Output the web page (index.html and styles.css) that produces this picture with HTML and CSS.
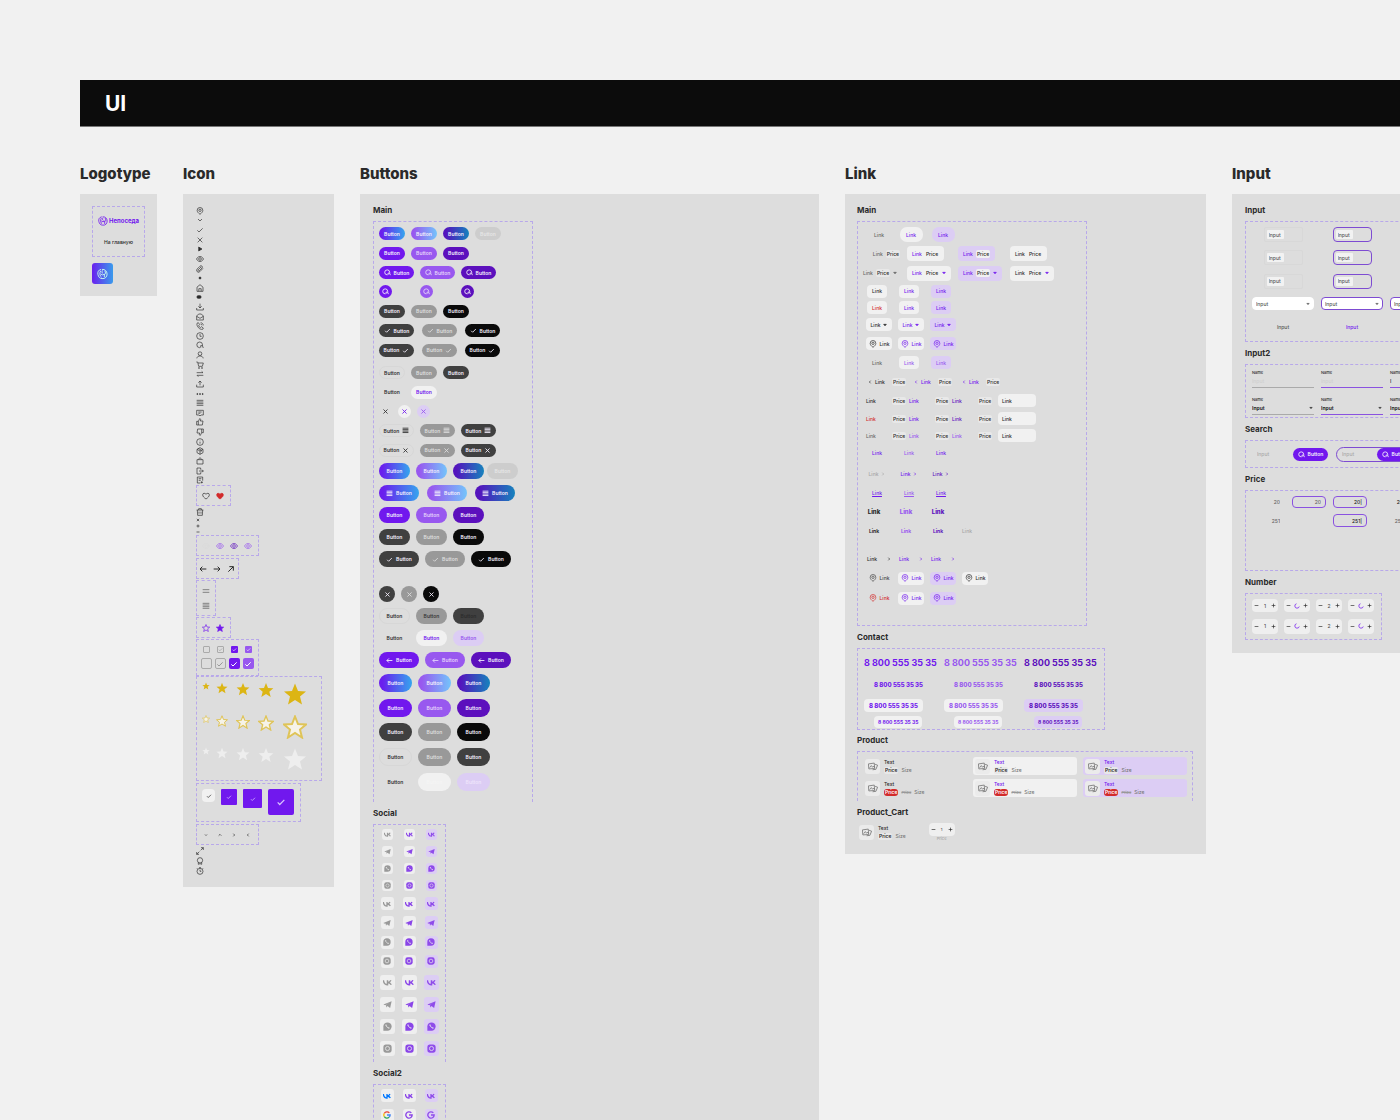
FILE: index.html
```html
<!DOCTYPE html>
<html lang="en">
<head>
<meta charset="utf-8">
<title>UI</title>
<link rel="stylesheet" href="styles.css">
</head>
<body>
<svg class="sprite" aria-hidden="true">
  <defs>
    <symbol id="pin" viewBox="0 0 24 24"><path d="M12 22C7 18 3.500 14.500 3.500 10a8.500 8.500 0 0 1 17 0c0 4.500-3.500 8-8.500 12z"/><circle cx="12" cy="10" r="3.500"/></symbol>
    <symbol id="down" viewBox="0 0 24 24"><path d="M6 9l6 6 6-6"/></symbol>
    <symbol id="check" viewBox="0 0 24 24"><path d="M4 13l5 5L20 7"/></symbol>
    <symbol id="x" viewBox="0 0 24 24"><path d="M5 5l14 14M19 5L5 19"/></symbol>
    <symbol id="play" viewBox="0 0 24 24"><path d="M8 6l10 6-10 6z" fill="currentColor"/></symbol>
    <symbol id="eye" viewBox="0 0 24 24"><path d="M1.500 12C4 7 8 4.500 12 4.500S20 7 22.500 12C20 17 16 19.500 12 19.500S4 17 1.500 12z"/><circle cx="12" cy="12" r="4"/></symbol>
    <symbol id="clip" viewBox="0 0 24 24"><path d="M21 10l-9.500 10a5.500 5.500 0 0 1-8-8L12 3.500a4 4 0 0 1 6 5.500L9.500 17.500a2 2 0 0 1-3-3L15 6"/></symbol>
    <symbol id="dot" viewBox="0 0 24 24"><circle cx="12" cy="12" r="3" fill="currentColor"/></symbol>
    <symbol id="home" viewBox="0 0 24 24"><path d="M3 9.500L12 2l9 7.500V22H3zM8.500 22v-8h7v8"/></symbol>
    <symbol id="blob" viewBox="0 0 24 24"><rect x="3" y="8" width="12" height="8" rx="3" fill="currentColor"/></symbol>
    <symbol id="download" viewBox="0 0 24 24"><path d="M12 2v13M7 10l5 5 5-5M2 15v6h20v-6"/></symbol>
    <symbol id="mail" viewBox="0 0 24 24"><path d="M2 9l6-6h8l6 6v12H2zM2 10l10 6 10-6"/></symbol>
    <symbol id="phone" viewBox="0 0 24 24"><path d="M3 4l4-2 4 6-3 3c1 3 3 5 5 6l3-3 6 4-2 4C11 24 1 13 3 4zM14 2c4 0 8 4 8 8M14 6c2 0 4 2 4 4"/></symbol>
    <symbol id="clock" viewBox="0 0 24 24"><circle cx="12" cy="12" r="10"/><path d="M12 6v7h5"/></symbol>
    <symbol id="search" viewBox="0 0 24 24"><path d="M12 20H10.500a8.500 8.500 0 1 1 9-8.500v3M14 14h5l3 7M14 14v6"/></symbol>
    <symbol id="user" viewBox="0 0 24 24"><circle cx="12" cy="8" r="5.500"/><path d="M2.500 22c1-6 5-7 9.500-7s8.500 1 9.500 7"/></symbol>
    <symbol id="cart" viewBox="0 0 24 24"><path d="M1 3h4l3 13h11l3-10H6"/><circle cx="9" cy="21" r="1.500"/><circle cx="18" cy="21" r="1.500"/></symbol>
    <symbol id="swap" viewBox="0 0 24 24"><path d="M2 8h19l-4-4M22 16H3l4 4"/></symbol>
    <symbol id="upload" viewBox="0 0 24 24"><path d="M12 16V3M7 8l5-5 5 5M2 14v7h20v-7"/></symbol>
    <symbol id="dots" viewBox="0 0 24 24"><g fill="currentColor"><circle cx="4" cy="12" r="1.500"/><circle cx="12" cy="12" r="1.500"/><circle cx="20" cy="12" r="1.500"/></g></symbol>
    <symbol id="list" viewBox="0 0 24 24"><path d="M2 4h20M2 9h20M2 14h20M2 19h20"/></symbol>
    <symbol id="comment" viewBox="0 0 24 24"><path d="M2 4h20v14h-7l-3 3-3-3H2zM7 9h10M7 13h6"/></symbol>
    <symbol id="like" viewBox="0 0 24 24"><path d="M2 10h5v11H2zM7 10l4-8c3 0 4 2 2 7h8l-2 12H7"/></symbol>
    <symbol id="dislike" viewBox="0 0 24 24"><path d="M22 14h-5V3h5zM17 14l-4 8c-3 0-4-2-2-7H3L5 3h12"/></symbol>
    <symbol id="info" viewBox="0 0 24 24"><circle cx="12" cy="12" r="10"/><path d="M12 11v6M12 7v1"/></symbol>
    <symbol id="box" viewBox="0 0 24 24"><path d="M12 2l9 5v10l-9 5-9-5V7zM3 7l9 5 9-5M12 12v10M7 4.500l9 5v4"/></symbol>
    <symbol id="bag" viewBox="0 0 24 24"><path d="M3 8h18v13H3zM8 8c0-7 8-7 8 0"/></symbol>
    <symbol id="exit" viewBox="0 0 24 24"><path d="M14 8V3H3v18h11v-5M9 12h13M18 8l4 4-4 4"/></symbol>
    <symbol id="note" viewBox="0 0 24 24"><path d="M20 14V3H4v18h9M8 8h8M8 13h6M17 16v6M14 19h7"/></symbol>
    <symbol id="heart" viewBox="0 0 24 24"><path d="M12 21C6 17 2 13 2 8.500 2 3 9 2 12 7c3-5 10-4 10 1.500 0 4.500-4 8.500-10 12.500z"/></symbol>
    <symbol id="trash" viewBox="0 0 24 24"><path d="M2 6h20M8 6V2h8v4M4 6l1 16h14l1-16M9 11v6M15 11v6"/></symbol>
    <symbol id="plus" viewBox="0 0 24 24"><path d="M12 3v18M3 12h18"/></symbol>
    <symbol id="minus" viewBox="0 0 24 24"><path d="M3 12h18"/></symbol>
    <symbol id="left" viewBox="0 0 24 24"><path d="M22 12H3M10 5l-7 7 7 7"/></symbol>
    <symbol id="right" viewBox="0 0 24 24"><path d="M2 12h19M14 5l7 7-7 7"/></symbol>
    <symbol id="upright" viewBox="0 0 24 24"><path d="M4 20L19 5M7 5h12v12"/></symbol>
    <symbol id="equals" viewBox="0 0 24 24"><path d="M2 8h20M2 16h20"/></symbol>
    <symbol id="star" viewBox="0 0 24 24"><path d="M12 1.500l3 7.500 8 .5-6 5 2 8-7-4.500L5 22.500l2-8-6-5L9 9z"/></symbol>
    <symbol id="expand" viewBox="0 0 24 24"><path d="M14 10l8-8M15 2h7v7M10 14l-8 8M2 15v7h7"/></symbol>
    <symbol id="award" viewBox="0 0 24 24"><circle cx="12" cy="10" r="8"/><path d="M7 17v5l5-2 5 2v-5"/></symbol>
    <symbol id="timer" viewBox="0 0 24 24"><circle cx="12" cy="13" r="9"/><path d="M9 1h6M12 8v5h4M20 4l2 2M4 4L2 6"/></symbol>
    <symbol id="caret" viewBox="0 0 24 24"><path d="M4 8h16l-8 9z" fill="currentColor"/></symbol>
    <symbol id="next" viewBox="0 0 24 24"><path d="M8 4l8 8-8 8"/></symbol>
    <symbol id="prev" viewBox="0 0 24 24"><path d="M16 4l-8 8 8 8"/></symbol>
    <symbol id="up" viewBox="0 0 24 24"><path d="M4 16l8-8 8 8"/></symbol>
    <symbol id="image" viewBox="0 0 24 24"><path d="M1 7l14-2 1 13-14 1zM17 8l6 2-4 10-8 1M4 16l4-5 3 4 3-3 2 4"/></symbol>
    <symbol id="spin" viewBox="0 0 24 24"><path d="M10 3a9 9 0 1 0 11 11"/></symbol>
    <symbol id="vk" viewBox="0 0 24 24"><path d="M1 6c1 8 4 12 11 12V6M12 12c4 0 7-2 9-6M12 12c5 0 8 2 10 6" stroke-width="4"/></symbol>
    <symbol id="tg" viewBox="0 0 24 24"><path d="M1 12L23 3l-4 18-7-5-3 4-1-7 10-7L6 14z" fill="currentColor" stroke="none"/></symbol>
    <symbol id="wa" viewBox="0 0 24 24"><path d="M1 23V12A11 11 0 1 1 12 23z" fill="currentColor" stroke="none"/><path d="M8 7c0 5 4 9 9 9M8 7v3M17 16h-3" class="knock"/></symbol>
    <symbol id="ig" viewBox="0 0 24 24"><rect x="1" y="1" width="22" height="22" rx="7" fill="currentColor" stroke="none"/><circle cx="12" cy="12" r="5.500" class="knock"/></symbol>
    <symbol id="google" viewBox="0 0 24 24"><g stroke-width="4"><path d="M19 5.500A9.500 9.500 0 0 0 4 7" class="g-red"/><path d="M4 7a9.500 9.500 0 0 0 0 10" class="g-yellow"/><path d="M4 17a9.500 9.500 0 0 0 14 2" class="g-green"/><path d="M18 19c2.500-2 3.500-4 3.500-7H12" class="g-blue"/></g></symbol>
    <symbol id="gmono" viewBox="0 0 24 24"><path d="M19 5.500A9.500 9.500 0 1 0 21.500 12H12" stroke-width="4"/></symbol>
    <symbol id="bird" viewBox="0 0 24 24"><path d="M9 2C3 3 1 8 2 13s4 9 9 9c7 1 11-4 11-10S17 1 11 2M8 5c-3 5-2 12 2 14M8 12l4 2 4-2v7M12 4c-2 3-1 6 1 7M17 5c2 4 2 6 0 8"/></symbol>
  </defs>
</svg>

<main class="canvas">
  <header class="bar"><h1>UI</h1></header>
  <div class="columns">

    <section class="column">
      <h2>Logotype</h2>
      <div class="panel panel-logo">
        <div class="frame logo-frame">
          <a class="logo" href="#"><svg><use href="#bird"/></svg>Непоседа</a>
          <a class="home-link" href="#">На главную</a>
        </div>
        <div class="app-tile"><svg><use href="#bird"/></svg></div>
      </div>
    </section>

    <section class="column">
      <h2>Icon</h2>
      <div class="panel panel-icon">
        <div class="icon-list">
          <svg><use href="#pin"/></svg><svg><use href="#down"/></svg><svg><use href="#check"/></svg><svg><use href="#x"/></svg><svg><use href="#play"/></svg><svg><use href="#eye"/></svg><svg><use href="#clip"/></svg><svg><use href="#dot"/></svg><svg><use href="#home"/></svg><svg><use href="#blob"/></svg><svg><use href="#download"/></svg><svg><use href="#mail"/></svg><svg><use href="#phone"/></svg><svg><use href="#clock"/></svg><svg><use href="#search"/></svg><svg><use href="#user"/></svg><svg><use href="#cart"/></svg><svg><use href="#swap"/></svg><svg><use href="#upload"/></svg><svg><use href="#dots"/></svg><svg><use href="#list"/></svg><svg><use href="#comment"/></svg><svg><use href="#like"/></svg><svg><use href="#dislike"/></svg><svg><use href="#info"/></svg><svg><use href="#box"/></svg><svg><use href="#bag"/></svg><svg><use href="#exit"/></svg><svg><use href="#note"/></svg>
        </div>
        <div class="frame set set-2"><svg><use href="#heart"/></svg><svg class="red solid"><use href="#heart"/></svg></div>
        <div class="tiny-list">
          <svg class="trash"><use href="#trash"/></svg><svg><use href="#x"/></svg><svg><use href="#plus"/></svg><svg><use href="#minus"/></svg>
        </div>
        <div class="frame set set-4"><svg class="faint"><use href="#eye"/></svg><svg class="violet-light"><use href="#eye"/></svg><svg class="violet-dark"><use href="#eye"/></svg><svg class="violet-light"><use href="#eye"/></svg></div>
        <div class="frame set set-arrows"><svg><use href="#left"/></svg><svg><use href="#right"/></svg><svg><use href="#upright"/></svg></div>
        <div class="frame set set-1"><svg><use href="#equals"/></svg><svg><use href="#list"/></svg></div>
        <div class="frame set set-2"><svg class="violet"><use href="#star"/></svg><svg class="violet solid"><use href="#star"/></svg></div>
        <div class="frame set set-checks">
          <input type="checkbox" aria-label="Empty small"><span class="tick line"><input type="checkbox" aria-label="Outline small"><svg><use href="#check"/></svg></span><span class="tick on"><input type="checkbox" checked aria-label="Checked small"><svg><use href="#check"/></svg></span><span class="tick on soft"><input type="checkbox" checked aria-label="Hover small"><svg><use href="#check"/></svg></span>
          <input class="big" type="checkbox" aria-label="Empty large"><span class="tick line"><input class="big" type="checkbox" aria-label="Outline large"><svg><use href="#check"/></svg></span><span class="tick on"><input class="big" type="checkbox" checked aria-label="Checked large"><svg><use href="#check"/></svg></span><span class="tick on soft"><input class="big" type="checkbox" checked aria-label="Hover large"><svg><use href="#check"/></svg></span>
        </div>
        <div class="frame stars">
          <div class="gold"><svg><use href="#star"/></svg><svg><use href="#star"/></svg><svg><use href="#star"/></svg><svg><use href="#star"/></svg><svg><use href="#star"/></svg></div>
          <div class="outline"><svg><use href="#star"/></svg><svg><use href="#star"/></svg><svg><use href="#star"/></svg><svg><use href="#star"/></svg><svg><use href="#star"/></svg></div>
          <div class="blank"><svg><use href="#star"/></svg><svg><use href="#star"/></svg><svg><use href="#star"/></svg><svg><use href="#star"/></svg><svg><use href="#star"/></svg></div>
        </div>
        <div class="frame check-tiles"><span><svg><use href="#check"/></svg></span><span><svg><use href="#check"/></svg></span><span><svg><use href="#check"/></svg></span><span><svg><use href="#check"/></svg></span></div>
        <div class="frame set set-4 carets"><svg><use href="#down"/></svg><svg><use href="#up"/></svg><svg><use href="#next"/></svg><svg><use href="#prev"/></svg></div>
        <div class="icon-tail"><svg><use href="#expand"/></svg><svg><use href="#award"/></svg><svg><use href="#timer"/></svg></div>
      </div>
    </section>

    <section class="column">
      <h2>Buttons</h2>
      <div class="panel panel-buttons">
        <h3>Main</h3>
        <div class="frame open buttons">
          <div class="rows rows-7 size-s">
            <div><button class="grad">Button</button><button class="grad-soft">Button</button><button class="grad-deep">Button</button><button class="off">Button</button></div>
            <div><button class="v">Button</button><button class="v-soft">Button</button><button class="v-deep">Button</button></div>
            <div><button class="v wide"><svg><use href="#search"/></svg>Button</button><button class="v-soft wide"><svg><use href="#search"/></svg>Button</button><button class="v-deep wide"><svg><use href="#search"/></svg>Button</button></div>
            <div class="spread"><button class="v round" aria-label="Search"><svg><use href="#search"/></svg></button><button class="v-soft round" aria-label="Search"><svg><use href="#search"/></svg></button><button class="v-deep round" aria-label="Search"><svg><use href="#search"/></svg></button></div>
            <div><button class="dark">Button</button><button class="mute">Button</button><button class="black">Button</button></div>
            <div class="loose"><button class="dark wide"><svg><use href="#check"/></svg>Button</button><button class="mute wide"><svg><use href="#check"/></svg>Button</button><button class="black wide"><svg><use href="#check"/></svg>Button</button></div>
            <div class="loose"><button class="dark wide">Button<svg><use href="#check"/></svg></button><button class="mute wide">Button<svg><use href="#check"/></svg></button><button class="black wide">Button<svg><use href="#check"/></svg></button></div>
          </div>
          <div class="rows rows-5 size-s">
            <div><button class="ghost">Button</button><button class="mute">Button</button><button class="dark">Button</button></div>
            <div><button class="plain">Button</button><button class="white">Button</button></div>
            <div><button class="plain round" aria-label="Close"><svg><use href="#x"/></svg></button><button class="white round" aria-label="Close"><svg><use href="#x"/></svg></button><button class="lilac round" aria-label="Close"><svg><use href="#x"/></svg></button></div>
            <div><button class="ghost wide">Button<svg><use href="#list"/></svg></button><button class="mute wide">Button<svg><use href="#list"/></svg></button><button class="dark wide">Button<svg><use href="#list"/></svg></button></div>
            <div><button class="ghost wide">Button<svg><use href="#x"/></svg></button><button class="mute wide">Button<svg><use href="#x"/></svg></button><button class="dark wide">Button<svg><use href="#x"/></svg></button></div>
          </div>
          <div class="rows rows-m size-m">
            <div><button class="grad">Button</button><button class="grad-soft">Button</button><button class="grad-deep">Button</button><button class="off near">Button</button></div>
            <div class="menu"><button class="grad wide"><svg><use href="#list"/></svg>Button</button><button class="grad-soft wide"><svg><use href="#list"/></svg>Button</button><button class="grad-deep wide"><svg><use href="#list"/></svg>Button</button></div>
            <div><button class="v">Button</button><button class="v-soft">Button</button><button class="v-deep">Button</button></div>
            <div><button class="dark">Button</button><button class="mute">Button</button><button class="black">Button</button></div>
            <div><button class="dark wide"><svg><use href="#check"/></svg>Button</button><button class="mute wide"><svg><use href="#check"/></svg>Button</button><button class="black wide"><svg><use href="#check"/></svg>Button</button></div>
          </div>
          <div class="rows rows-m size-m apart">
            <div><button class="dark round" aria-label="Close"><svg><use href="#x"/></svg></button><button class="mute round" aria-label="Close"><svg><use href="#x"/></svg></button><button class="black round" aria-label="Close"><svg><use href="#x"/></svg></button></div>
            <div><button class="ghost">Button</button><button class="mute ink">Button</button><button class="dark ink">Button</button></div>
            <div><button class="plain">Button</button><button class="white">Button</button><button class="lilac">Button</button></div>
            <div><button class="v wide"><svg><use href="#left"/></svg>Button</button><button class="v-soft wide"><svg><use href="#left"/></svg>Button</button><button class="v-deep wide"><svg><use href="#left"/></svg>Button</button></div>
          </div>
          <div class="rows rows-l size-l">
            <div><button class="grad">Button</button><button class="grad-soft">Button</button><button class="grad-deep">Button</button></div>
            <div><button class="v">Button</button><button class="v-soft">Button</button><button class="v-deep">Button</button></div>
            <div><button class="dark">Button</button><button class="mute">Button</button><button class="black">Button</button></div>
            <div><button class="ghost">Button</button><button class="mute">Button</button><button class="dark">Button</button></div>
            <div><button class="plain">Button</button><button class="white pale">Button</button><button class="lilac pale">Button</button></div>
          </div>
        </div>

        <h3>Social</h3>
        <div class="frame open social">
          <div class="tiles tiles-s">
            <a href="#"><svg><use href="#vk"/></svg></a><a href="#"><svg><use href="#vk"/></svg></a><a href="#"><svg><use href="#vk"/></svg></a>
            <a href="#"><svg><use href="#tg"/></svg></a><a href="#"><svg><use href="#tg"/></svg></a><a href="#"><svg><use href="#tg"/></svg></a>
            <a href="#"><svg><use href="#wa"/></svg></a><a href="#"><svg><use href="#wa"/></svg></a><a href="#"><svg><use href="#wa"/></svg></a>
            <a href="#"><svg><use href="#ig"/></svg></a><a href="#"><svg><use href="#ig"/></svg></a><a href="#"><svg><use href="#ig"/></svg></a>
          </div>
          <div class="tiles tiles-m">
            <a href="#"><svg><use href="#vk"/></svg></a><a href="#"><svg><use href="#vk"/></svg></a><a href="#"><svg><use href="#vk"/></svg></a>
            <a href="#"><svg><use href="#tg"/></svg></a><a href="#"><svg><use href="#tg"/></svg></a><a href="#"><svg><use href="#tg"/></svg></a>
            <a href="#"><svg><use href="#wa"/></svg></a><a href="#"><svg><use href="#wa"/></svg></a><a href="#"><svg><use href="#wa"/></svg></a>
            <a href="#"><svg><use href="#ig"/></svg></a><a href="#"><svg><use href="#ig"/></svg></a><a href="#"><svg><use href="#ig"/></svg></a>
          </div>
          <div class="tiles tiles-l">
            <a href="#"><svg><use href="#vk"/></svg></a><a href="#"><svg><use href="#vk"/></svg></a><a href="#"><svg><use href="#vk"/></svg></a>
            <a href="#"><svg><use href="#tg"/></svg></a><a href="#"><svg><use href="#tg"/></svg></a><a href="#"><svg><use href="#tg"/></svg></a>
            <a href="#"><svg><use href="#wa"/></svg></a><a href="#"><svg><use href="#wa"/></svg></a><a href="#"><svg><use href="#wa"/></svg></a>
            <a href="#"><svg><use href="#ig"/></svg></a><a href="#"><svg><use href="#ig"/></svg></a><a href="#"><svg><use href="#ig"/></svg></a>
          </div>
        </div>

        <h3>Social2</h3>
        <div class="frame open social">
          <div class="tiles tiles-m tiles-2">
            <a href="#" class="brand-vk"><svg><use href="#vk"/></svg></a><a href="#"><svg><use href="#vk"/></svg></a><a href="#"><svg><use href="#vk"/></svg></a>
            <a href="#"><svg><use href="#google"/></svg></a><a href="#"><svg><use href="#gmono"/></svg></a><a href="#"><svg><use href="#gmono"/></svg></a>
          </div>
        </div>
      </div>
    </section>

    <section class="column">
      <h2>Link</h2>
      <div class="panel panel-link">
        <h3>Main</h3>
        <div class="frame links">
          <div class="lrows lrows-a">
            <div class="four in"><a href="#" class="gray">Link</a><a href="#" class="chip pill">Link</a><a href="#" class="chip pill lav">Link</a></div>
            <div class="cards"><a href="#" class="gray card end">Link <b>Price</b></a><a href="#" class="chip card">Link <b>Price</b></a><a href="#" class="chip card lav">Link <b>Price</b></a><a href="#" class="chip card text">Link <b>Price</b></a></div>
            <div class="cards"><a href="#" class="gray card">Link <b>Price</b><svg><use href="#caret"/></svg></a><a href="#" class="chip card">Link <b>Price</b><svg><use href="#caret"/></svg></a><a href="#" class="chip card lav">Link <b>Price</b><svg><use href="#caret"/></svg></a><a href="#" class="chip card text">Link <b>Price</b><svg class="violet"><use href="#caret"/></svg></a></div>
          </div>
          <div class="lrows lrows-b">
            <div class="four"><a href="#" class="chip text">Link</a><a href="#" class="chip">Link</a><a href="#" class="chip lav">Link</a></div>
            <div class="four"><a href="#" class="chip red">Link</a><a href="#" class="chip">Link</a><a href="#" class="chip lav">Link</a></div>
            <div class="four in"><a href="#" class="chip long text">Link<svg><use href="#caret"/></svg></a><a href="#" class="chip long">Link<svg><use href="#caret"/></svg></a><a href="#" class="chip long lav">Link<svg><use href="#caret"/></svg></a></div>
          </div>
          <div class="lrows lrows-c">
            <div class="four in"><a href="#" class="chip long text"><svg class="pin"><use href="#pin"/></svg>Link</a><a href="#" class="chip long"><svg class="pin"><use href="#pin"/></svg>Link</a><a href="#" class="chip long lav"><svg class="pin"><use href="#pin"/></svg>Link</a></div>
            <div class="four"><a href="#" class="gray">Link</a><a href="#" class="chip soft">Link</a><a href="#" class="chip lav soft">Link</a></div>
            <div class="six"><a href="#" class="text"><svg><use href="#prev"/></svg>Link</a><b>Price</b><a href="#"><svg><use href="#prev"/></svg>Link</a><b>Price</b><a href="#"><svg><use href="#prev"/></svg>Link</a><b>Price</b></div>
            <div class="seven"><a href="#" class="text">Link</a><b>Price</b><a href="#">Link</a><b>Price</b><a href="#" class="deep">Link</a><b>Price</b><a href="#" class="chip block text">Link</a></div>
          </div>
          <div class="lrows lrows-d">
            <div class="seven"><a href="#" class="red">Link</a><b>Price</b><a href="#">Link</a><b>Price</b><a href="#" class="deep">Link</a><b>Price</b><a href="#" class="chip block text">Link</a></div>
            <div class="seven"><a href="#" class="gray">Link</a><b>Price</b><a href="#" class="soft">Link</a><b>Price</b><a href="#" class="soft">Link</a><b>Price</b><a href="#" class="chip block text">Link</a></div>
            <div class="four"><a href="#">Link</a><a href="#" class="soft">Link</a><a href="#">Link</a></div>
          </div>
          <div class="lrows lrows-e">
            <div class="four"><a href="#" class="ash">Link<svg><use href="#next"/></svg></a><a href="#">Link<svg><use href="#next"/></svg></a><a href="#" class="deep">Link<svg><use href="#next"/></svg></a></div>
            <div class="four"><a href="#" class="line">Link</a><a href="#" class="line soft">Link</a><a href="#" class="line">Link</a></div>
            <div class="four back"><a href="#" class="text large">Link</a><a href="#" class="soft large">Link</a><a href="#" class="deep large">Link</a></div>
            <div class="four back"><a href="#" class="text heavy">Link</a><a href="#" class="soft heavy">Link</a><a href="#" class="deep heavy">Link</a><a href="#" class="ash early">Link</a></div>
          </div>
          <div class="lrows lrows-f">
            <div class="four in"><a href="#" class="text far">Link<svg><use href="#next"/></svg></a><a href="#" class="far">Link<svg><use href="#next"/></svg></a><a href="#" class="far">Link<svg><use href="#next"/></svg></a></div>
            <div class="four in"><a href="#" class="dim"><svg class="pin"><use href="#pin"/></svg>Link</a><a href="#" class="chip long"><svg class="pin"><use href="#pin"/></svg>Link</a><a href="#" class="chip long lav"><svg class="pin"><use href="#pin"/></svg>Link</a><a href="#" class="chip long text"><svg class="pin"><use href="#pin"/></svg>Link</a></div>
            <div class="four in"><a href="#" class="red"><svg class="pin"><use href="#pin"/></svg>Link</a><a href="#" class="chip long"><svg class="pin"><use href="#pin"/></svg>Link</a><a href="#" class="chip long lav"><svg class="pin"><use href="#pin"/></svg>Link</a></div>
          </div>
        </div>

        <h3>Contact</h3>
        <div class="frame contact">
          <a href="#" class="t1">8 800 555 35 35</a><a href="#" class="t1 soft">8 800 555 35 35</a><a href="#" class="t1 deep">8 800 555 35 35</a>
          <a href="#" class="t2">8 800 555 35 35</a><a href="#" class="t2 soft">8 800 555 35 35</a><a href="#" class="t2 deep">8 800 555 35 35</a>
          <a href="#" class="t3">8 800 555 35 35</a><a href="#" class="t3 soft">8 800 555 35 35</a><a href="#" class="t3 deep lav">8 800 555 35 35</a>
          <a href="#" class="t4">8 800 555 35 35</a><a href="#" class="t4 soft">8 800 555 35 35</a><a href="#" class="t4 deep lav">8 800 555 35 35</a>
        </div>

        <h3>Product</h3>
        <div class="frame open products">
          <article class="product"><span class="thumb"><svg><use href="#image"/></svg></span><div><p>Text</p><p><b>Price</b><small>Size</small></p></div></article>
          <article class="product chip"><span class="thumb"><svg><use href="#image"/></svg></span><div><p>Text</p><p><b>Price</b><small>Size</small></p></div></article>
          <article class="product chip lav"><span class="thumb"><svg><use href="#image"/></svg></span><div><p>Text</p><p><b>Price</b><small>Size</small></p></div></article>
          <article class="product"><span class="thumb"><svg><use href="#image"/></svg></span><div><p>Text</p><p><b class="sale">Price</b><s>Price</s><small>Size</small></p></div></article>
          <article class="product chip"><span class="thumb"><svg><use href="#image"/></svg></span><div><p>Text</p><p><b class="sale">Price</b><s>Price</s><small>Size</small></p></div></article>
          <article class="product chip lav"><span class="thumb"><svg><use href="#image"/></svg></span><div><p>Text</p><p><b class="sale">Price</b><s>Price</s><small>Size</small></p></div></article>
        </div>

        <h3>Product_Cart</h3>
        <div class="cart">
          <article class="product"><span class="thumb"><svg><use href="#image"/></svg></span><div><p>Text</p><p><b>Price</b><small>Size</small></p></div></article>
          <div class="cart-count">
            <div class="counter"><button aria-label="Less"><svg><use href="#minus"/></svg></button><span>1</span><button aria-label="More"><svg><use href="#plus"/></svg></button></div>
            <small>Price</small>
          </div>
        </div>
      </div>
    </section>

    <section class="column">
      <h2>Input</h2>
      <div class="panel panel-input">
        <h3>Input</h3>
        <div class="frame inputs">
          <div class="fields">
            <label class="field"><input value="Input" aria-label="Input"></label><label class="field focus"><input value="Input" aria-label="Input"></label>
            <label class="field"><input value="Input" aria-label="Input"></label><label class="field focus"><input value="Input" aria-label="Input"></label>
            <label class="field"><input value="Input" aria-label="Input"></label><label class="field focus"><input value="Input" aria-label="Input"></label>
          </div>
          <div class="selects">
            <label class="select"><select aria-label="Input"><option>Input</option></select><svg><use href="#caret"/></svg></label><label class="select focus"><select aria-label="Input"><option>Input</option></select><svg><use href="#caret"/></svg></label><label class="select focus"><select aria-label="Input"><option>Input</option></select><svg><use href="#caret"/></svg></label>
          </div>
          <div class="bare"><input value="Input" aria-label="Input"><input class="violet" value="Input" aria-label="Input"></div>
        </div>

        <h3>Input2</h3>
        <div class="frame inputs2">
          <label>Name<input placeholder="Input"></label><label class="focus">Name<input placeholder="Input"></label><label class="focus">Name<input value="I"></label>
          <label>Name<span class="drop"><select><option>Input</option></select><svg><use href="#caret"/></svg></span></label><label class="focus">Name<span class="drop"><select><option>Input</option></select><svg><use href="#caret"/></svg></span></label><label class="focus">Name<span class="drop"><select><option>Input</option></select><svg><use href="#caret"/></svg></span></label>
        </div>

        <h3>Search</h3>
        <div class="frame search size-s">
          <form><input placeholder="Input" aria-label="Search"><button type="button" class="v wide"><svg><use href="#search"/></svg>Button</button></form>
          <form class="focus"><input placeholder="Input" aria-label="Search"><button type="button" class="v wide"><svg><use href="#search"/></svg>Button</button></form>
        </div>

        <h3>Price</h3>
        <div class="frame prices">
          <input value="20" aria-label="From"><input class="focus" value="20" aria-label="From"><input class="focus dark-text" value="20|" aria-label="From"><input class="dark-text" value="20" aria-label="From">
          <input value="251" aria-label="To"><span></span><input class="focus dark-text" value="251|" aria-label="To"><input value="251" aria-label="To">
        </div>

        <h3>Number</h3>
        <div class="frame numbers">
          <div class="counter"><button aria-label="Less"><svg><use href="#minus"/></svg></button><span>1</span><button aria-label="More"><svg><use href="#plus"/></svg></button></div>
          <div class="counter"><button aria-label="Less"><svg><use href="#minus"/></svg></button><svg class="spin"><use href="#spin"/></svg><button aria-label="More"><svg><use href="#plus"/></svg></button></div>
          <div class="counter"><button aria-label="Less"><svg><use href="#minus"/></svg></button><span>2</span><button aria-label="More"><svg><use href="#plus"/></svg></button></div>
          <div class="counter"><button aria-label="Less"><svg><use href="#minus"/></svg></button><svg class="spin"><use href="#spin"/></svg><button aria-label="More"><svg><use href="#plus"/></svg></button></div>
          <div class="counter tall"><button aria-label="Less"><svg><use href="#minus"/></svg></button><span>1</span><button aria-label="More"><svg><use href="#plus"/></svg></button></div>
          <div class="counter tall"><button aria-label="Less"><svg><use href="#minus"/></svg></button><svg class="spin"><use href="#spin"/></svg><button aria-label="More"><svg><use href="#plus"/></svg></button></div>
          <div class="counter tall"><button aria-label="Less"><svg><use href="#minus"/></svg></button><span>2</span><button aria-label="More"><svg><use href="#plus"/></svg></button></div>
          <div class="counter tall"><button aria-label="Less"><svg><use href="#minus"/></svg></button><svg class="spin"><use href="#spin"/></svg><button aria-label="More"><svg><use href="#plus"/></svg></button></div>
        </div>
      </div>
    </section>
  </div>
</main>
</body>
</html>
```

FILE: styles.css
```css
:root {
  --ink: #2a2a2a;
  --violet: #7118ee;
  --violet-soft: #9858ef;
  --violet-deep: #5c10bd;
  --lilac: #dccdf4;
  --white: #f1f1f1;
  --dash: #b8a8ea;
  --red: #d22b2b;
}
* { box-sizing: border-box; }
body { margin: 0; background: #f1f1f1; color: var(--ink); font: 500 5px/6px Inter, "Liberation Sans", sans-serif; }
h1, h2, h3, p { margin: 0; }
a { color: var(--violet); text-decoration: none; }
button, input, select { margin: 0; padding: 0; border: 0; background: none; color: inherit; font: inherit; outline: 0; }
svg { display: block; flex: none; width: 8px; height: 8px; fill: none; stroke: currentColor; stroke-width: 2; }
.sprite { position: absolute; width: 0; height: 0; }
.knock { stroke: #eee; }
.g-red { stroke: #ea4335; } .g-yellow { stroke: #fbbc05; } .g-green { stroke: #34a853; } .g-blue { stroke: #4285f4; }

.canvas { height: 100vh; overflow: hidden; padding: 80px 0 0 80px; }
.bar { display: flex; align-items: center; height: 47px; padding: 2px 25px 0; background: #0c0c0c; border-bottom: 1px solid #777; color: #fff; }
h1 { font-size: 21px; line-height: 24px; font-weight: 700; }
.columns { display: flex; align-items: flex-start; gap: 26px; padding-top: 37px; }
.column { flex: none; }
h2 { margin-bottom: 10px; font-size: 15px; line-height: 20px; font-weight: 800; }
h3 { margin: 6px 0 5px; font-size: 8px; line-height: 11px; font-weight: 700; }
.panel { padding: 5px 13px 13px; background: #ddd; }
.frame { border: 1px dashed var(--dash); }
.open { border-bottom: 0; }

.red { color: var(--red); }
.violet { color: var(--violet); }
.violet-light { color: var(--violet-soft); }
.violet-dark { color: var(--violet-deep); }
.faint { color: #dadada; }
.solid { fill: currentColor; }

/* Logotype */
.panel-logo { width: 77px; padding: 12px; }
.logo-frame { display: flex; flex-direction: column; align-items: center; gap: 12px; height: 51px; padding-top: 8px; }
.logo { display: flex; align-items: center; gap: 1px; font-size: 6px; font-weight: 700; }
.logo svg { width: 10px; height: 12px; }
.home-link { color: var(--ink); }
.app-tile { display: grid; place-items: center; width: 21px; height: 21px; margin-top: 6px; border-radius: 3px; background: linear-gradient(90deg, #6a1fee, #3a9bec); color: #cfe; }
.app-tile svg { width: 11px; height: 12px; }

/* Icons */
.panel-icon { display: flex; flex-direction: column; align-items: flex-start; width: 151px; padding: 12px 13px; }
.icon-list { display: grid; grid-auto-rows: 1fr; align-items: center; height: 279px; }
.set { display: grid; grid-auto-flow: row; grid-template-columns: repeat(4, 8px); gap: 6px; align-items: center; padding: 5px; }
.set-1 { grid-template-columns: 8px; height: 36px; margin-bottom: 1px; color: #555; }
.set-2 { grid-template-columns: repeat(2, 8px); width: 35px; height: 21px; }
.set-4 { width: 63px; height: 21px; margin-bottom: 2px; }
.set-arrows { grid-template-columns: repeat(3, 8px); padding: 5px 2px; width: 43px; height: 21px; margin-bottom: 1px; }
.set-arrows svg { stroke-width: 3; }
.tiny-list { display: flex; flex-direction: column; gap: 2px; height: 29px; padding-top: 2px; }
.tiny-list svg { width: 4px; height: 4px; stroke-width: 4; }
.tiny-list .trash { width: 8px; height: 8px; stroke-width: 2; }
.set-checks { width: 63px; height: 37px; margin-top: 1px; gap: 2px 6px; justify-items: center; padding: 4px 5px; }
.set-checks input { appearance: none; display: block; width: 7px; height: 7px; border: 1px solid #aaa; border-radius: 1px; }
.set-checks .big { width: 11px; height: 11px; border-radius: 2px; }
.tick { display: grid; place-items: center; color: #999; }
.tick > * { grid-area: 1 / 1; }
.tick svg { width: 5px; height: 5px; stroke-width: 3; pointer-events: none; }
.tick .big + svg { width: 8px; height: 8px; }
.tick.on { color: #fff; }
.tick.on input { border: 0; background: var(--violet); }
.tick.soft input { background: var(--violet-soft); }
.stars { display: grid; grid-auto-rows: 1fr; width: 126px; height: 105px; padding: 5px 0 0 5px; }
.stars div { display: flex; align-items: flex-start; }
.stars svg { width: 8px; height: 8px; margin-right: 6px; fill: currentColor; stroke: none; }
.stars svg:nth-child(2) { width: 12px; height: 12px; margin-right: 8px; }
.stars svg:nth-child(3) { width: 14px; height: 14px; margin-right: 8px; }
.stars svg:nth-child(4) { width: 16px; height: 16px; margin-right: 9px; }
.stars svg:nth-child(5) { width: 24px; height: 24px; margin: 0; }
.gold { color: #dcb514; }
.stars .outline svg { color: #f6f3e8; stroke: #dfc458; }
.stars .blank { color: #eee; }
.check-tiles { display: flex; align-items: flex-start; gap: 6px; width: 105px; height: 39px; margin-top: 2px; padding: 5px; }
.check-tiles span { display: grid; place-items: center; width: 16px; height: 16px; border-radius: 1px; background: var(--violet); color: #d9c2ff; }
.check-tiles span:nth-child(1) { width: 13px; height: 13px; border-radius: 4px; background: var(--white); color: #333; }
.check-tiles span:nth-child(3) { width: 19px; height: 19px; }
.check-tiles span:nth-child(4) { width: 26px; height: 26px; border-radius: 2px; }
.check-tiles svg { width: 6px; height: 6px; stroke-width: 3; }
.check-tiles span:nth-child(4) svg { width: 10px; height: 10px; }
.carets { margin-top: 2px; }
.carets svg { width: 4px; height: 4px; margin-left: 2px; stroke-width: 4; }
.icon-tail { display: grid; gap: 2px; }

/* Buttons */
.panel-buttons { width: 459px; }
.buttons { width: 160px; height: 581px; padding: 2px 0 8px 5px; }
.rows { display: grid; grid-auto-rows: 1fr; }
.rows > div { display: flex; align-items: center; gap: 6px; }
.rows > .loose { gap: 8px; }
.rows > .menu { gap: 8px; }
.rows > .spread { gap: 28px; }
.rows-7 { height: 136px; }
.rows-5 { height: 97px; margin-top: 3px; }
.rows-m { grid-auto-rows: 22px; }
.apart { margin-top: 13px; }
.rows-l { height: 123px; }
.size-s button, .size-m button, .size-l button { display: inline-flex; align-items: center; justify-content: center; gap: 3px; flex: none; font-weight: 600; color: #f4eefc; }
.size-s button { width: 26px; height: 13px; border-radius: 7px; }
.size-s .wide { width: 35px; }
.size-s .round { width: 13px; }
.size-m button { width: 31px; height: 16px; border-radius: 8px; }
.size-m .wide { width: 40px; }
.size-m .round { width: 16px; }
.size-l button { width: 33px; height: 18px; border-radius: 9px; }
.buttons svg { width: 7px; height: 7px; stroke-width: 3; }
.rows .grad { background: linear-gradient(90deg, #6a1fee 10%, #35a5ee); }
.rows .grad-soft { background: linear-gradient(90deg, #9858ef 10%, #74c4fb); }
.rows .grad-deep { background: linear-gradient(90deg, #5414bd 10%, #1683bd); }
.size-s .v, .size-m .v, .size-l .v { background: var(--violet); }
.rows .v-soft { background: var(--violet-soft); color: #e4d2fb; }
.rows .v-deep { background: var(--violet-deep); }
.rows .dark { background: #404040; }
.rows .mute { background: #999; color: #ddd; }
.rows .black { background: #0a0a0a; }
.rows .off { background: #cdcdcd; color: #e6e6e6; }
.rows .near { margin-left: -3px; }
.rows .ghost { border: 1px solid #d7d7d7; color: #333; }
.rows .plain { color: #333; }
.rows .white { background: var(--white); color: var(--violet); }
.rows .lilac { background: var(--lilac); color: var(--violet-soft); }
.rows .ink { color: #3a3a3a; }
.rows .dark.ink { color: #2c2c2c; }
.rows .white.pale { color: #f5f5f5; }
.rows .lilac.pale { color: #eee4fb; }

/* Social */
.social { width: 73px; padding: 1px 0 3px 2px; }
.tiles { display: grid; grid-template-columns: repeat(3, 22px); grid-auto-rows: 1fr; place-items: center; }
.tiles-s { height: 68px; } .tiles-m { height: 77px; } .tiles-l { height: 88px; }
.tiles-2 { height: 39px; }
.tiles a { display: grid; place-items: center; width: 11px; height: 11px; border-radius: 3px; background: #efefef; color: #999; }
.tiles svg { width: 7px; height: 7px; }
.tiles-m a { width: 13px; height: 13px; } .tiles-m svg { width: 8px; height: 8px; }
.tiles-l a { width: 15px; height: 15px; } .tiles-l svg { width: 9px; height: 9px; }
.tiles a:nth-child(3n+2) { color: #8a45e8; }
.tiles a:nth-child(3n) { background: var(--lilac); color: #8f4cea; }
.tiles .brand-vk { color: #0077ff; }

/* Links */
.panel-link { width: 361px; padding: 5px 12px 13px; }
.links { width: 230px; height: 405px; padding-top: 3px; }
.links a { display: inline-flex; align-items: center; gap: 3px; }
.links svg { width: 4px; height: 4px; stroke-width: 4; }
.links .pin { width: 8px; height: 8px; stroke-width: 2; }
.lrows { display: grid; grid-auto-rows: 1fr; }
.lrows > div { display: grid; align-items: center; }
.lrows-a { height: 58px; } .lrows-b { height: 50px; }
.lrows-c { height: 76px; margin-top: 1px; } .lrows-d { height: 52px; }
.lrows-e { height: 76px; margin-top: 2px; } .lrows-f { height: 59px; margin-top: 9px; }
.four { grid-template-columns: repeat(4, 32px); justify-items: center; padding-left: 3px; }
.in { padding-left: 5px; }
.back { padding-left: 0; }
.cards { grid-template-columns: 49px 51px 52px 48px; justify-items: start; }
.six { grid-template-columns: 24px 22px 24px 24px 24px 16px; justify-items: start; padding-left: 10px; }
.seven { grid-template-columns: 26px 17px 26px 17px 26px 20px 40px; justify-items: start; padding-left: 8px; }
.links .text, .links b, .product b { color: var(--ink); }
.links b, .product b { padding: 1px; border-radius: 2px; background: #e8e8e8; font-weight: 500; }
.links .chip { justify-content: center; min-width: 20px; height: 13px; border-radius: 4px; background: var(--white); }
.links .chip b { background: none; }
.links .lav b { background: var(--white); }
.links .lav, .contact .lav, .products .lav { background: var(--lilac); }
.links .pill { width: 23px; height: 15px; border-radius: 7px; }
.links .card { height: 15px; padding: 0 5px; }
.links .end { justify-self: end; margin-right: 2px; }
.links .long { width: 26px; }
.links .block { width: 38px; justify-content: flex-start; padding-left: 4px; }
.links .gray { color: #666; } .links .dim { color: #444; } .links .ash { color: #a6a6a6; }
.links .red { color: var(--red); }
.panel-link .soft { color: var(--violet-soft); } .panel-link .deep { color: var(--violet-deep); }
.links .line { text-decoration: underline; }
.links .large { font-size: 6px; font-weight: 800; }
.links .heavy { font-weight: 700; }
.links .early { margin-right: 6px; }
.links .far { gap: 10px; }

/* Contact */
.contact { display: grid; grid-template-columns: repeat(3, 80px); grid-template-rows: 20px 23px 18px 15px; align-items: center; justify-items: start; width: 248px; height: 82px; padding: 4px 0 0 6px; font-weight: 700; }
.contact + h3 { margin-top: 5px; }
.t1 { font-size: 9px; line-height: 12px; }
.t2, .t3 { font-size: 6px; line-height: 13px; font-weight: 800; }
.t2, .t4 { margin-left: 10px; }
.t3, .t4 { padding: 0 5px; border-radius: 4px; background: var(--white); }
.t4 { padding: 0 4px; line-height: 12px; }

/* Product */
.products { display: grid; grid-template-columns: 110px 110px 104px; grid-auto-rows: 18px; gap: 4px 0; width: 336px; height: 50px; padding: 5px 0 0 5px; }
.product { display: flex; align-items: center; gap: 4px; padding-left: 2px; line-height: 5px; }
.products .chip { width: 104px; border-radius: 3px; background: var(--white); }
.products .lav { background: var(--lilac); }
.thumb { display: grid; place-items: center; width: 15px; height: 15px; border-radius: 3px; background: #ebebeb; color: #777; }
.thumb svg { width: 10px; height: 10px; }
.product p { display: flex; align-items: center; gap: 3px; height: 8px; }
.product.chip p:first-child { color: var(--violet); }
.product b { padding: 1px; font-weight: 600; }
.product .sale { border-radius: 3px; background: var(--red); color: #fff; }
.product small { font-size: 5px; color: #777; }
.product s { font-size: 4px; color: #999; }
.cart { display: flex; gap: 23px; }
.cart-count { display: grid; justify-items: center; font-size: 4px; color: #aaa; }
.cart-count small { font-size: 4px; line-height: 5px; }

/* Counters */
.counter { display: flex; align-items: center; justify-content: space-between; width: 26px; height: 13px; padding: 0 2px; border-radius: 4px; background: #efefef; color: #555; }
.counter svg { width: 5px; height: 5px; stroke-width: 3; }
.counter button { color: #222; }
.counter .spin { color: var(--violet); width: 6px; height: 6px; }
.tall { height: 15px; }

/* Inputs */
.panel-input { width: 460px; }
.panel-input input, .panel-input select { width: 100%; min-width: 0; }
.inputs { height: 121px; padding: 1px 0 0 6px; }
.fields { display: grid; grid-template-columns: repeat(2, 62px); grid-auto-rows: 1fr; gap: 0 7px; place-items: center; height: 70px; }
.field { display: flex; align-items: center; width: 39px; height: 15px; padding-left: 2px; border: 1px solid #d8d8d8; border-radius: 2px; }
.panel-input .field input { width: 17px; height: 9px; padding-left: 2px; border-radius: 1px; background: #f2f2f2; color: #555; }
.field.focus { border-color: #7d4bd2; border-radius: 4px; }
.selects { display: grid; grid-template-columns: repeat(3, 62px); gap: 7px; align-items: center; height: 21px; }
.select { display: flex; align-items: center; height: 13px; padding: 0 3px; border: 1px solid #fff; border-radius: 4px; background: #fff; color: #555; }
.select.focus { border-color: #7d4bd2; }
select { appearance: none; }
.panel-input label svg { width: 4px; height: 4px; }
.bare { display: grid; grid-template-columns: repeat(2, 62px); gap: 7px; height: 26px; align-items: center; color: #555; }
.bare input { text-align: center; }
.inputs2 { display: grid; grid-template-columns: repeat(3, 62px); gap: 7px; height: 54px; padding: 5px 0 0 6px; font-size: 4px; }
.inputs2 label { display: block; height: 18px; border-bottom: 1px solid #aaa; }
.inputs2 .focus { border-color: #8a52e0; }
.inputs2 input, .inputs2 select { display: block; height: 10px; font-size: 5px; }
.inputs2 select { font-weight: 700; }
.drop { display: flex; align-items: center; padding-right: 1px; }
::placeholder { color: #d0d0d0; opacity: 1; }
.search { display: flex; align-items: center; gap: 7px; height: 28px; padding-left: 5px; }
.search form { display: flex; align-items: center; width: 78px; height: 15px; padding: 0 1px 0 6px; }
.search form.focus { width: 77px; padding: 0 0 0 5px; border: 1px solid #7d4bd2; border-radius: 8px; }
.search ::placeholder { color: #aaa; }
.search svg { width: 7px; height: 7px; stroke-width: 3; }
.prices { display: grid; grid-template-columns: repeat(4, 34px); grid-template-rows: 12px 13px; gap: 6px 7px; height: 81px; padding: 5px; }
.prices input { height: 100%; padding-right: 4px; border: 1px solid transparent; border-radius: 4px; color: #666; text-align: right; }
.prices .focus { border-color: #8a52e0; }
.prices .dark-text { color: #222; }
.numbers { display: grid; grid-template-columns: repeat(4, 26px); gap: 6px; width: 137px; height: 47px; padding: 5px 6px; }
```
